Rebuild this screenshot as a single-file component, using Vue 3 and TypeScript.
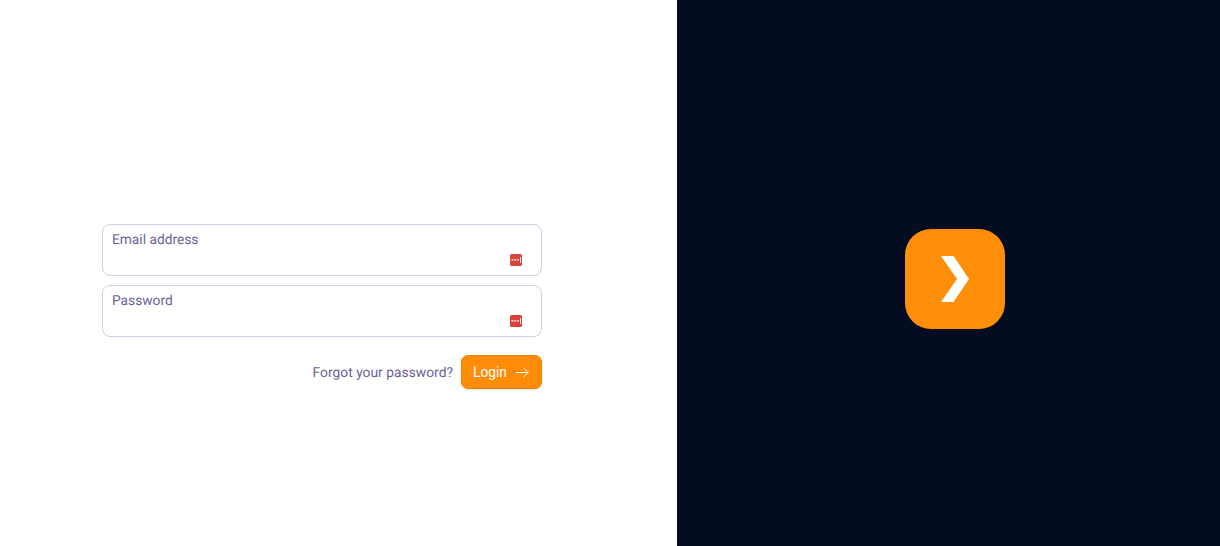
<script setup lang="ts">
const fields = ['Email address', 'Password']
</script>

<template>
  <div class="page">
    <main class="left">
      <form class="form" @submit.prevent>
        <label v-for="f in fields" :key="f" class="field">
          <span class="label">{{ f }}</span>
          <svg class="key" width="12" height="12" viewBox="0 0 12 12">
            <rect width="12" height="12" rx="1.5" fill="#d9433a" />
            <rect x="1.5" y="5.2" width="1.8" height="1.3" fill="#fff" />
            <rect x="4.3" y="5.2" width="1.8" height="1.3" fill="#fff" />
            <rect x="7.1" y="5.2" width="1.8" height="1.3" fill="#fff" />
            <rect x="10" y="3" width="0.9" height="6" fill="#fff" />
          </svg>
        </label>
        <div class="actions">
          <a class="forgot">Forgot your password?</a>
          <button class="login" type="submit">
            <span>Login</span>
            <svg class="arrow" width="13" height="11" viewBox="0 0 13 11" fill="none" stroke="#fff" stroke-width="1">
              <path d="M0 5.5H12.2M7.4 .7l4.8 4.8-4.8 4.8" />
            </svg>
          </button>
        </div>
      </form>
    </main>
    <aside class="right">
      <div class="logo">
        <svg width="28" height="46" viewBox="0 0 28 46">
          <path d="M0 0H12.5L28 23 12.5 46H0L16 23Z" fill="#fff" />
        </svg>
      </div>
    </aside>
  </div>
</template>

<style>
html, body { margin: 0; background: #fff; }
</style>

<style scoped>
.page {
  display: flex;
  height: 546px;
  overflow: hidden;
  font-family: Roboto, "Liberation Sans", sans-serif;
  text-rendering: geometricPrecision;
}
.left {
  width: 677px;
  display: flex;
  align-items: center;
  padding-left: 102px;
  box-sizing: border-box;
}
.form {
  width: 440px;
  display: flex;
  flex-direction: column;
  gap: 9px;
  margin-top: 67px;
}
.field {
  position: relative;
  display: block;
  height: 52px;
  box-sizing: border-box;
  border: 1px solid #d3cfe6;
  border-radius: 8px;
  padding: 4px 9px;
}
.label {
  font-size: 13.75px;
  line-height: 17px;
  color: #6b6296;
}
.key {
  position: absolute;
  right: 19px;
  top: 29px;
}
.actions {
  display: flex;
  justify-content: flex-end;
  align-items: center;
  gap: 8px;
  margin-top: 9px;
}
.forgot {
  font-size: 13.75px;
  letter-spacing: 0.04px;
  line-height: 18px;
  padding-top: 2px;
  color: #6b6296;
}
.login {
  display: flex;
  align-items: center;
  justify-content: space-between;
  height: 34px;
  width: 81px;
  box-sizing: border-box;
  padding: 0 12px 0 11px;
  border: 1px solid #f08400;
  border-radius: 7px;
  background: #ff8c07;
  color: #fff;
  font: inherit;
  font-size: 13.75px;
  box-shadow: 0 1px 2px rgba(0, 0, 0, 0.12);
}
.arrow {
  flex-shrink: 0;
}
.right {
  flex: 1;
  background: #030c20;
  display: flex;
  align-items: center;
  justify-content: center;
}
.logo {
  width: 100px;
  height: 100px;
  border-radius: 26px;
  background: #ff8f0a;
  display: flex;
  align-items: center;
  justify-content: center;
  margin: 12px 0 0 12px;
}
</style>
